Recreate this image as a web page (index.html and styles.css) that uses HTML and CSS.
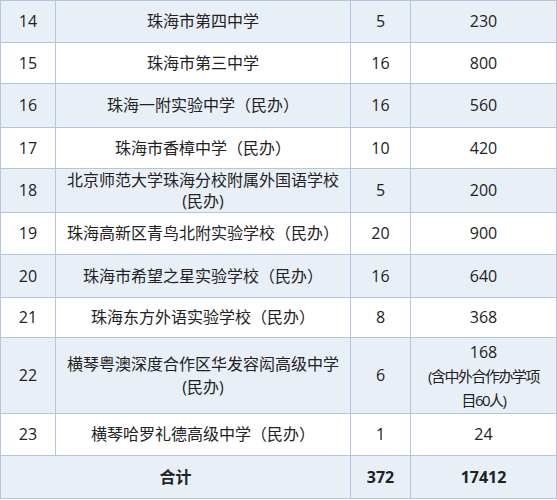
FILE: index.html
```html
<!DOCTYPE html>
<html lang="zh-CN">
<head>
<meta charset="utf-8">
<link rel="stylesheet" href="styles.css">
</head>
<body>
<table class="grid">
  <colgroup>
    <col class="c-no"><col class="c-name"><col class="c-cls"><col class="c-num">
  </colgroup>
  <tbody>
    <tr class="band h42"><td>14</td><td>珠海市第四中学</td><td>5</td><td>230</td></tr>
    <tr class="h41"><td>15</td><td>珠海市第三中学</td><td>16</td><td>800</td></tr>
    <tr class="band h44"><td>16</td><td>珠海一附实验中学（民办）</td><td>16</td><td>560</td></tr>
    <tr class="h41"><td>17</td><td>珠海市香樟中学（民办）</td><td>10</td><td>420</td></tr>
    <tr class="band h44"><td>18</td><td class="two">北京师范大学珠海分校附属外国语学校<br>(民办)</td><td>5</td><td>200</td></tr>
    <tr class="h42"><td>19</td><td>珠海高新区青鸟北附实验学校（民办）</td><td>20</td><td>900</td></tr>
    <tr class="band h43"><td>20</td><td>珠海市希望之星实验学校（民办）</td><td>16</td><td>640</td></tr>
    <tr class="h40"><td>21</td><td>珠海东方外语实验学校（民办）</td><td>8</td><td>368</td></tr>
    <tr class="band h76"><td>22</td><td class="two wide">横琴粤澳深度合作区华发容闳高级中学<br>(民办)</td><td>6</td><td class="three">168<br><span class="tight">(含中外合作办学项<br>目60人)</span></td></tr>
    <tr class="h42"><td>23</td><td>横琴哈罗礼德高级中学（民办）</td><td>1</td><td>24</td></tr>
    <tr class="band h43 total"><td colspan="2">合计</td><td>372</td><td>17412</td></tr>
  </tbody>
</table>
</body>
</html>
```

FILE: styles.css
```css
html, body {
  margin: 0;
  padding: 0;
  background: #ffffff;
}

.grid {
  border-collapse: collapse;
  table-layout: fixed;
  width: 556px;
  font-family: "Open Sans", "Noto Sans CJK SC", sans-serif;
  font-size: 16px;
  color: #222222;
}

.c-no { width: 55px; }
.c-name { width: 295px; }
.c-cls { width: 60px; }
.c-num { width: 146px; }

.grid td {
  border: 1px solid #b3c5df;
  padding: 0;
  text-align: center;
  vertical-align: middle;
  line-height: 21px;
  white-space: nowrap;
}

.band td { background: #e9eff7; }

.h40 { height: 40px; }
.h41 { height: 41px; }
.h42 { height: 42px; }
.h43 { height: 43px; }
.h44 { height: 44px; }
.h76 { height: 76px; }

.grid td.wide { line-height: 23px; }
.grid td.three { line-height: 24px; }

.tight {
  font-size: 15px;
  letter-spacing: -1.5px;
}

.total td { font-weight: 700; }
```
